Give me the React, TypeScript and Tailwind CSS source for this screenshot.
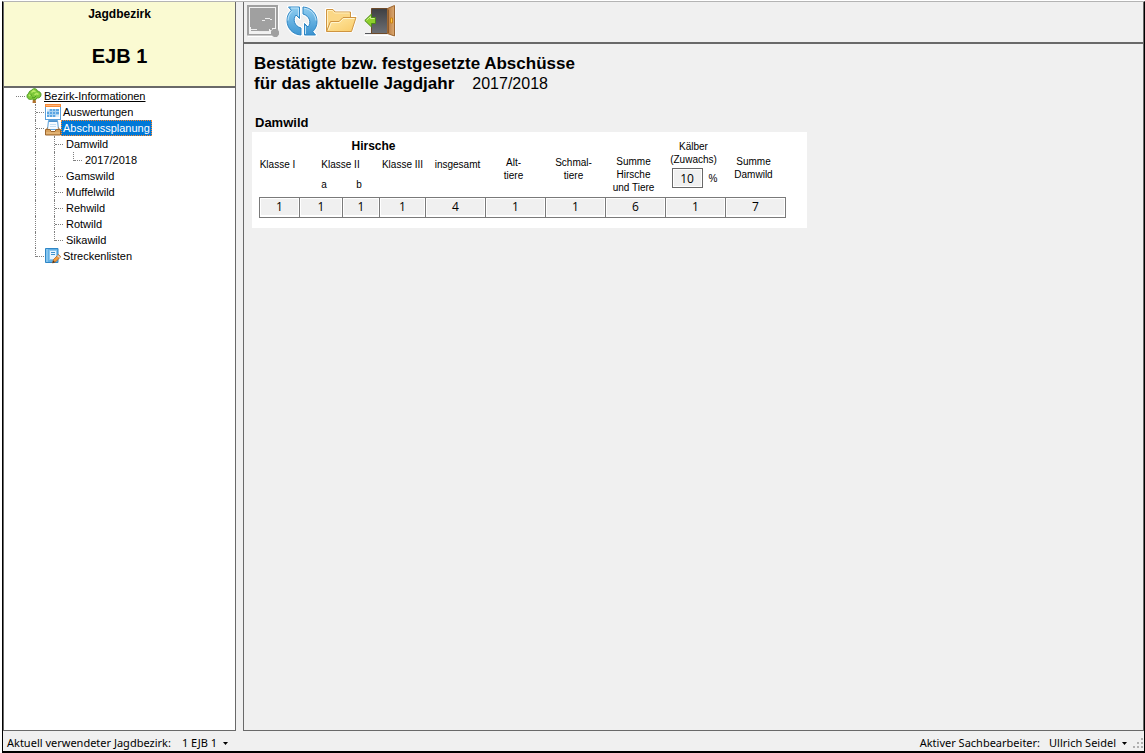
import React from "react";

type Guide = "dash" | "tee" | "elbow" | "line" | "blank";

function GuideCell({ kind }: { kind: Guide }) {
  if (kind === "blank") return <span className="h-4 w-[19px] shrink-0" />;
  const vertical = kind === "dash" ? "" : "border-l border-dotted border-[#808080]";
  const height = kind === "elbow" ? "h-[9px]" : "h-4";
  return (
    <span className="flex h-4 w-[19px] shrink-0 pl-[10px]">
      <span className={`flex flex-1 flex-col ${vertical} ${height}`}>
        {kind !== "line" && <span className="h-[9px] border-b border-dotted border-[#808080]" />}
      </span>
    </span>
  );
}

function TreeIcon() {
  return (
    <svg viewBox="0 0 16 16" className="h-4 w-4" aria-hidden="true">
      <path d="M7 10h2.500l.5 5H6.500z" fill="#b0702c" />
      <path d="M8 .8c1.800-.5 3.400.8 3.300 2.400 2-.1 3.700 1.400 3.700 3.400 0 2.500-2 3.800-3.800 3.200C10.400 12 7.700 12.500 6.300 11 3.900 12.200 1 10.800 1 8.200c0-1.400.7-2.500 1.900-3C2.800 3.500 4.200 2.500 5.400 2.700 5.800 1.500 6.800.8 8 .8z" fill="#7cc83a" stroke="#4f9a20" />
      <path d="M5.500 4.500l2-2 2 1.300M3 8l1.500-1.500M8.500 7l2-1.500 2 1" fill="none" stroke="#b9ea66" strokeWidth="1.500" />
      <path d="M6 9l2 1 2-2M4.500 6.500l1.500 1" fill="none" stroke="#4f9a20" />
    </svg>
  );
}

function CalendarIcon() {
  return (
    <svg viewBox="0 0 16 16" className="h-4 w-4" aria-hidden="true">
      <rect x=".5" y=".5" width="15" height="15" fill="#fff" stroke="#5aa0dc" />
      <path d="M0 0h16v3H0z" fill="#f58a37" />
      <path d="M1 1.500h14" stroke="#ffb47a" />
      <path d="M2 5h12v8H2z" fill="#5aa5e2" />
      <path d="M4.500 5v8M7.500 5v8M10.500 5v8M2 7.500h12M2 10.500h12" stroke="#a8d2f2" />
      <path d="M2 5h2v2H2zM11 11h3v2h-3z" fill="#d8ebfa" />
    </svg>
  );
}

function TrayIcon() {
  return (
    <svg viewBox="0 0 16 16" className="h-4 w-4" aria-hidden="true">
      <path d="M3.500.5h9l1 9h-11z" fill="#f7fbff" stroke="#5a9fd8" />
      <path d="M4 1.500h8" stroke="#4b91cc" />
      <path d="M5 4.500h6M5 6.500h6" stroke="#c4dff4" />
      <path d="M1.500 9.500l1-2M14.500 9.500l-1-2" stroke="#b77931" />
      <path d="M.5 9.500H5l1 2h4l1-2h4.500v5.500H.5z" fill="#d6a05c" stroke="#9c662d" />
      <path d="M1 13h14" stroke="#edc58d" />
    </svg>
  );
}

function NotebookIcon() {
  return (
    <svg viewBox="0 0 16 16" className="h-4 w-4" aria-hidden="true">
      <path d="M.5.500h12.500v14H.5z" fill="#61b0e6" stroke="#2f86c6" />
      <path d="M4.500 2.500h7v9h-7z" fill="#e8f5ff" stroke="#8cc5ec" />
      <path d="M6 4.500h4M6 6.500h4" stroke="#3f91cc" />
      <path d="M2 1v13" stroke="#a8daf8" />
      <path d="M7.500 15l1-3.500 5-5 2.300 2.200-5 5z" fill="#f59a3c" stroke="#a85d1b" strokeWidth=".7" />
      <path d="M7.500 15l.7-2.500 1.800 1.700z" fill="#443322" />
      <path d="M12.500 7.500l2.300 2" stroke="#d3d8de" strokeWidth="1.300" />
    </svg>
  );
}

function SafeIcon() {
  return (
    <svg viewBox="0 0 32 32" className="h-8 w-8" aria-hidden="true">
      <path d="M1 31h24v1H1zM31 1v23h1V1zM26 32h6v-6h1v7h-7z" fill="#fff" />
      <path d="M0 0h31v25l1 1.500v3L30 32h-3l-2-1.500H0z" fill="#a0a0a0" />
      <path d="M2 2h27v22h-3l-2 2v3H2z" fill="#f2f2f2" />
      <path d="M3 3h25v20h-3v1h-3v2H4v-4H3z" fill="#a0a0a0" />
      <path d="M15 15.500h3M18 13.500h5M23 14.500h2M4 24.500h6M12 26.500h10" fill="none" stroke="#ededed" />
      <path d="M25 26h1v2h-1zM23 24h2v1h-2z" fill="#a0a0a0" />
    </svg>
  );
}

function RefreshIcon() {
  return (
    <svg viewBox="0 0 32 32" className="h-8 w-8" aria-hidden="true">
      <defs>
        <linearGradient id="blueLeft" x1="0" y1="0" x2="0" y2="1">
          <stop stopColor="#8fcdf0" />
          <stop offset="1" stopColor="#3f97d3" />
        </linearGradient>
        <linearGradient id="blueRight" x1="0" y1="1" x2="0" y2="0">
          <stop stopColor="#3b93d0" />
          <stop offset="1" stopColor="#8fcdf0" />
        </linearGradient>
      </defs>
      <g stroke="#fff" strokeWidth="3" strokeLinejoin="round">
        <path d="M2.500 2H13.500V13.500L10 10C6.500 14 8 21 15 23V30C6.500 29.500 1 23 1 15.500C1 11.500 2.500 8 5.300 5.300Z" />
        <path d="M29.500 30H18.500V18.500L22 22C25.500 18 24 11 17 9V2C25.500 2.500 31 9 31 16.500C31 20.500 29.500 24 26.700 26.700Z" />
      </g>
      <g stroke="#2f86c4" strokeLinejoin="round">
        <path d="M2.500 2H13.500V13.500L10 10C6.500 14 8 21 15 23V30C6.500 29.500 1 23 1 15.500C1 11.500 2.500 8 5.300 5.300Z" fill="url(#blueLeft)" />
        <path d="M29.500 30H18.500V18.500L22 22C25.500 18 24 11 17 9V2C25.500 2.500 31 9 31 16.500C31 20.500 29.500 24 26.700 26.700Z" fill="url(#blueRight)" />
      </g>
      <path d="M5 3H12.500V11M6.300 6C3.500 8.500 2 12 2 15.500M18 3.200C25 4 29.500 9.500 30 15.500M19.500 21v8" fill="none" stroke="#bfe3f8" />
    </svg>
  );
}

function FolderIcon() {
  return (
    <svg viewBox="0 0 32 32" className="h-8 w-8" aria-hidden="true">
      <defs>
        <linearGradient id="manila" x1="0" y1="0" x2="1" y2="1">
          <stop stopColor="#ffe9a6" />
          <stop offset="1" stopColor="#f9cb68" />
        </linearGradient>
      </defs>
      <path d="M1.500 26V4.500h6l2 2.500H25.500v5H31l-4.500 14z" fill="none" stroke="#fff" strokeWidth="3" strokeLinejoin="round" />
      <path d="M1.500 26V4.500h6.500l2 2.500h15.500v10L10 26z" fill="#fbd786" stroke="#cf9440" strokeLinejoin="round" />
      <path d="M2.500 25V5.500H7.500l2 2.500h15" fill="none" stroke="#fff0c0" />
      <path d="M1.500 26.500L5.500 16.500h8.500l4-4h13L26.500 26.500z" fill="url(#manila)" stroke="#cf9440" strokeLinejoin="round" />
      <path d="M3.500 25L6.300 17.500H14.500l4-4H29.500" fill="none" stroke="#fff5cf" />
    </svg>
  );
}

function ExitIcon() {
  return (
    <svg viewBox="0 0 32 32" className="h-8 w-8" aria-hidden="true">
      <defs>
        <linearGradient id="wood" x1="0" y1="0" x2="1" y2="0">
          <stop stopColor="#b87b42" />
          <stop offset="1" stopColor="#dca970" />
        </linearGradient>
        <linearGradient id="hall" x1="0" y1="0" x2="0" y2="1">
          <stop stopColor="#3e3f42" />
          <stop offset="1" stopColor="#6e7074" />
        </linearGradient>
      </defs>
      <path d="M0 30.500h23l8 1.500V0" fill="none" stroke="#fff" />
      <path d="M1 28.500h22" stroke="#55565a" />
      <path d="M7.500 3.500h16v25h-16z" fill="url(#hall)" stroke="#6d4a2a" />
      <path d="M23.500 3.500l7-3v30.500l-7-2.500z" fill="url(#wood)" stroke="#9c6631" strokeLinejoin="round" />
      <path d="M24.500 4.500v23.500" stroke="#8d5a2b" />
      <path d="M26.500 13h2v5h-2z" fill="#ffc843" stroke="#c98116" />
      <path d="M.8 15.500L7.500 9v3.500h4v6h-4V22z" fill="#8ecf2c" stroke="#4c8b16" strokeLinejoin="round" />
      <path d="M2.500 15.300L6.500 11.500V13.500h4" fill="none" stroke="#cdf08e" />
    </svg>
  );
}

type Node = { label: string; guides: Guide[]; icon?: React.ReactNode; underline?: boolean; selected?: boolean };

const nodes: Node[] = [
  { label: "Bezirk-Informationen", guides: ["dash"], icon: <TreeIcon />, underline: true },
  { label: "Auswertungen", guides: ["blank", "tee"], icon: <CalendarIcon /> },
  { label: "Abschussplanung", guides: ["blank", "tee"], icon: <TrayIcon />, selected: true },
  { label: "Damwild", guides: ["blank", "line", "tee"] },
  { label: "2017/2018", guides: ["blank", "line", "line", "elbow"] },
  { label: "Gamswild", guides: ["blank", "line", "tee"] },
  { label: "Muffelwild", guides: ["blank", "line", "tee"] },
  { label: "Rehwild", guides: ["blank", "line", "tee"] },
  { label: "Rotwild", guides: ["blank", "line", "tee"] },
  { label: "Sikawild", guides: ["blank", "line", "elbow"] },
  { label: "Streckenlisten", guides: ["blank", "elbow"], icon: <NotebookIcon /> },
];

function TreeRow({ node }: { node: Node }) {
  const look = node.selected
    ? "bg-[#0078d7] text-white outline-1 -outline-offset-1 outline-dotted outline-[#ff8728]"
    : "";
  return (
    <li role="treeitem" aria-level={node.guides.length} aria-selected={!!node.selected} className="flex h-4 items-center pl-[2px]">
      {node.guides.map((g, i) => (
        <GuideCell key={i} kind={g} />
      ))}
      <span className="pl-px">{node.icon}</span>
      <button className={`h-4 px-[2px] text-[11px] leading-4 whitespace-nowrap ${look} ${node.underline ? "underline" : ""}`}>
        {node.label}
      </button>
    </li>
  );
}

const values = [1, 1, 1, 1, 4, 1, 1, 6, 1, 7];

const tools = [
  { name: "Speichern", icon: <SafeIcon />, disabled: true },
  { name: "Aktualisieren", icon: <RefreshIcon /> },
  { name: "Ordner öffnen", icon: <FolderIcon /> },
  { name: "Schließen", icon: <ExitIcon /> },
];

function StatusMenu({ children }: { children: React.ReactNode }) {
  return (
    <button className="flex items-center gap-[6px]">
      {children}
      <svg viewBox="0 0 5 3" className="h-[3px] w-[5px]" aria-hidden="true">
        <path d="M0 0h5L2.500 3z" fill="#000" />
      </svg>
    </button>
  );
}

function PlanTable() {
  return (
    <table className="table-fixed border-collapse text-center text-[10px] leading-[13px]">
      <colgroup>
        <col className="w-[40px]" />
        <col className="w-[43px]" />
        <col className="w-[37px]" />
        <col className="w-[46px]" />
        <col className="w-[60px]" />
        <col className="w-[60px]" />
        <col className="w-[60px]" />
        <col className="w-[60px]" />
        <col className="w-[60px]" />
        <col className="w-[60px]" />
      </colgroup>
      <thead className="[&_th]:p-0 [&_th]:font-normal [&_th]:whitespace-nowrap">
        <tr className="h-[18px]">
          <th colSpan={5}>
            <b className="pl-[2px] text-[12px]">Hirsche</b>
          </th>
          <th rowSpan={3}>
            <div className="pt-1 pr-1">Alt-<br />tiere</div>
          </th>
          <th rowSpan={3}>
            <div className="pt-1 pr-1">Schmal-<br />tiere</div>
          </th>
          <th rowSpan={3} className="align-bottom">
            <div className="pr-1 pb-[3px]">Summe<br />Hirsche<br />und Tiere</div>
          </th>
          <th rowSpan={3} className="align-top">
            <label htmlFor="zuwachs" className="block pt-[3px] pr-1">Kälber<br />(Zuwachs)</label>
            <div className="flex items-center justify-center gap-[6px] pt-[2px] pr-[2px]">
              <input
                id="zuwachs"
                defaultValue="10"
                className="h-5 w-[31px] border border-[#696969] bg-[#f0f0f0] text-center font-['Open_Sans',sans-serif] text-[12px] ring-1 ring-white ring-inset"
              />
              <span>%</span>
            </div>
          </th>
          <th rowSpan={3}>
            <div className="pt-[2px] pr-1">Summe<br />Damwild</div>
          </th>
        </tr>
        <tr className="h-[18px]">
          <th>
            <div className="-ml-1">Klasse I</div>
          </th>
          <th colSpan={2}>
            <div className="pl-[2px]">Klasse II</div>
          </th>
          <th>Klasse III</th>
          <th>
            <div className="pl-1">insgesamt</div>
          </th>
        </tr>
        <tr className="h-6">
          <th />
          <th>
            <div className="pl-[6px]">a</div>
          </th>
          <th>
            <div className="pr-1">b</div>
          </th>
          <th />
          <th />
        </tr>
      </thead>
      <tbody>
        <tr>
          {values.map((v, i) => (
            <td key={i} className="h-5 border border-[#7a7a7a] bg-white p-px font-['Open_Sans',sans-serif] text-[12px]">
              <div className="h-4 bg-[#f0f0f0] leading-4">{v}</div>
            </td>
          ))}
        </tr>
      </tbody>
    </table>
  );
}

export default function App() {
  return (
    <div className="flex h-screen flex-col bg-white pt-px pl-[2px] font-['Liberation_Sans',Arial,sans-serif] text-black">
      <div className="flex min-h-0 flex-1 flex-col border-t border-r border-b-2 border-l border-t-[#b4b4b4] border-r-black border-b-black border-l-black bg-[#f0f0f0]">
        <div className="flex min-h-0 flex-1 gap-[7px]">
          <aside className="flex w-[233px] shrink-0 flex-col border-r border-b border-l border-[#696969] bg-white">
            <header className="flex h-[86px] flex-col items-center border-b-2 border-[#696969] bg-[#fafad2] pt-1 font-bold">
              <h2 className="text-[12px] leading-4">Jagdbezirk</h2>
              <p className="pt-[22px] text-[20px] leading-6">EJB 1</p>
            </header>
            <ul role="tree" aria-label="Bezirk">
              {nodes.map((n) => (
                <TreeRow key={n.label} node={n} />
              ))}
            </ul>
          </aside>
          <main className="flex min-w-0 flex-1 flex-col border-r border-b border-l border-[#696969]">
            <div role="toolbar" aria-label="Werkzeuge" className="flex h-[42px] shrink-0 gap-[7px] border-b-2 border-[#696969] pt-[3px] pl-[3px]">
              {tools.map((t) => (
                <button key={t.name} aria-label={t.name} disabled={t.disabled} className="h-8 w-8">
                  {t.icon}
                </button>
              ))}
            </div>
            <div className="flex flex-col items-start pt-[10px] pl-2">
              <h1 className="pl-[2px] text-[17px] leading-5 font-bold">
                Bestätigte bzw. festgesetzte Abschüsse
                <br />
                für das aktuelle Jagdjahr
                <span className="pl-[18px] text-[16px] font-normal">2017/2018</span>
              </h1>
              <h2 className="pt-[21px] pl-[3px] text-[13px] leading-4 font-bold">Damwild</h2>
              <section className="mt-px bg-white pt-[5px] pr-[21px] pb-[10px] pl-[7px]">
                <PlanTable />
              </section>
            </div>
          </main>
        </div>
        <footer className="flex h-5 shrink-0 items-center justify-between pt-1 pl-1 font-['Noto_Sans',sans-serif] text-[11px] leading-4">
          <div className="flex gap-[11px]">
            <span>Aktuell verwendeter Jagdbezirk:</span>
            <StatusMenu>1 EJB 1</StatusMenu>
          </div>
          <div className="flex items-center gap-[9px]">
            <span>Aktiver Sachbearbeiter:</span>
            <StatusMenu>Ullrich Seidel</StatusMenu>
            <svg viewBox="0 0 11 11" className="-ml-[3px] h-[11px] w-[11px]" aria-hidden="true">
              <path d="M8 0h2v2H8zM4 4h2v2H4zM8 4h2v2H8zM0 8h2v2H0zM4 8h2v2H4zM8 8h2v2H8z" fill="#b0b0b0" />
            </svg>
          </div>
        </footer>
      </div>
    </div>
  );
}
